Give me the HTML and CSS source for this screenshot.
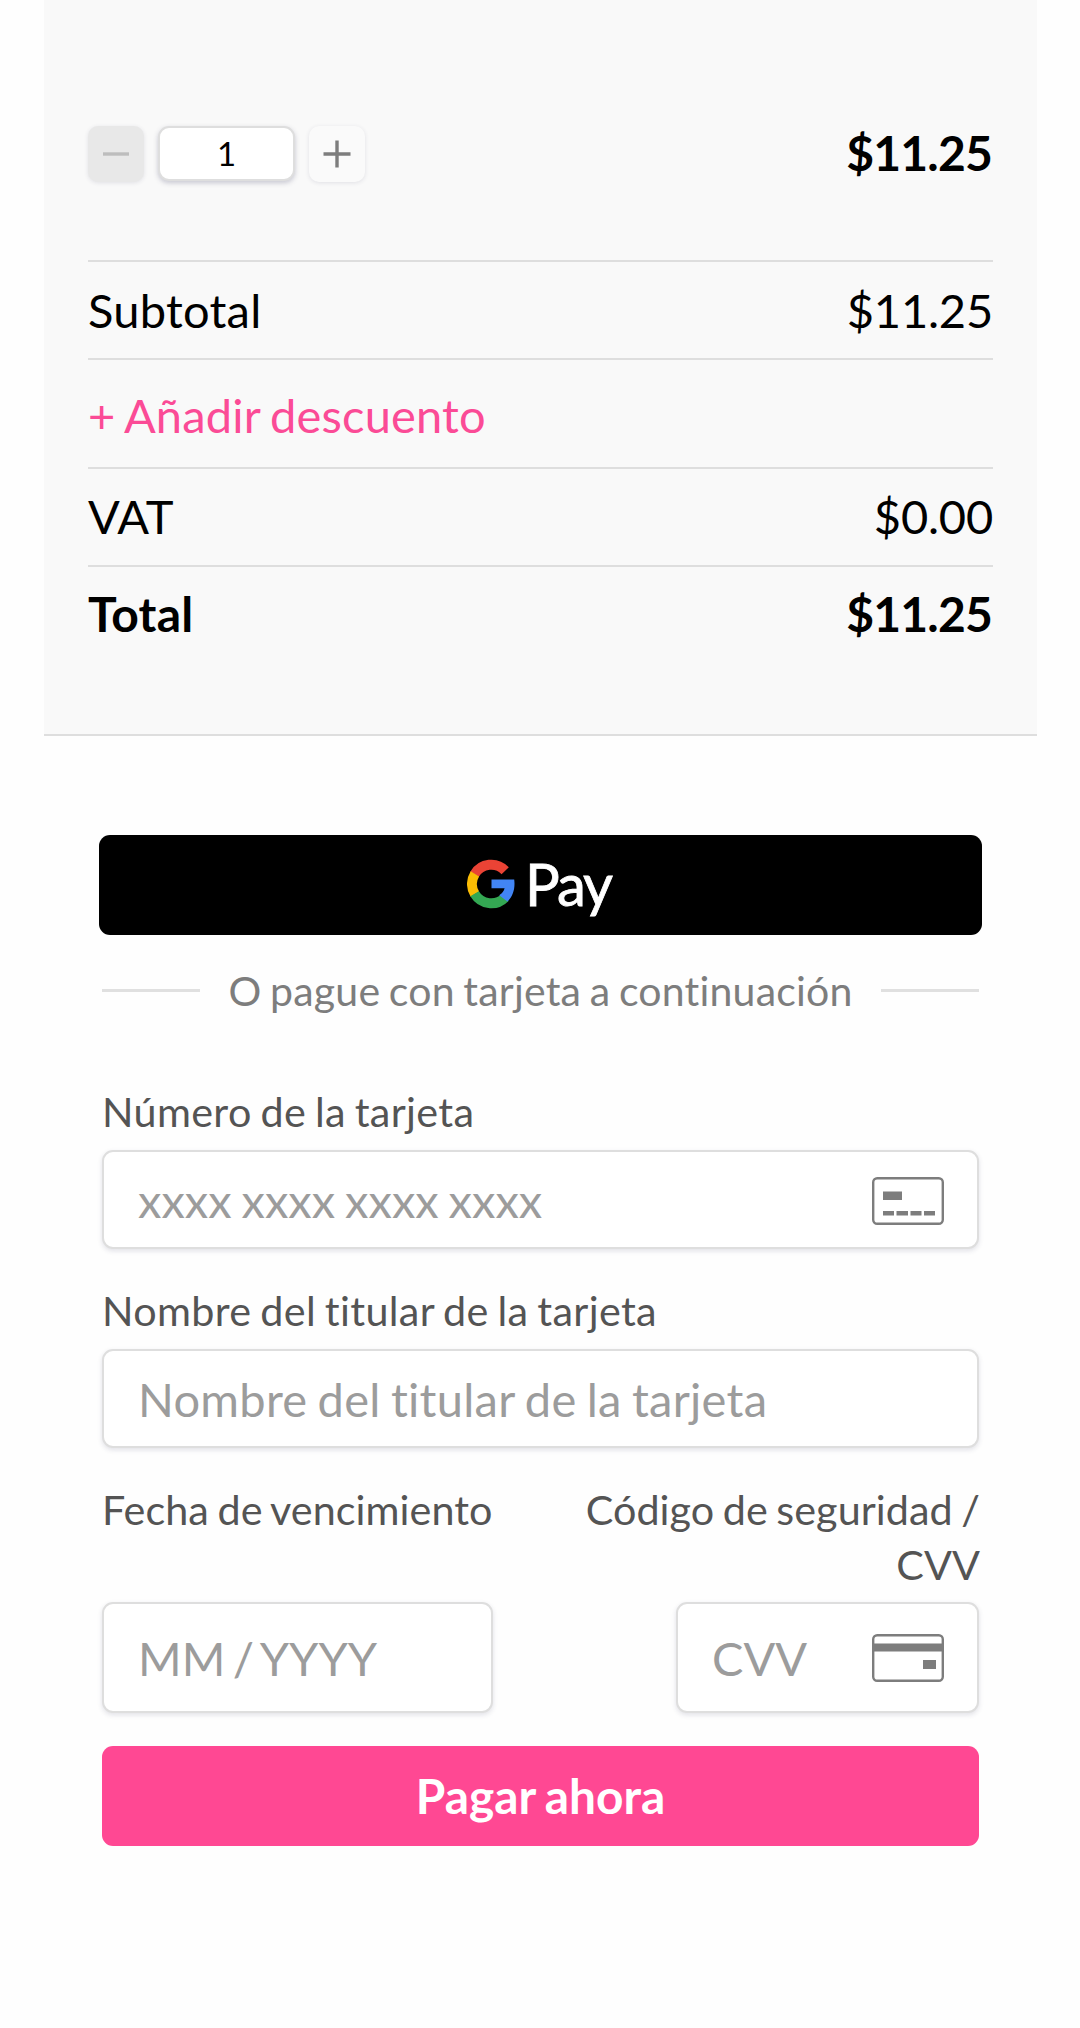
FILE: index.html
```html
<!DOCTYPE html>
<html lang="es">
<head>
  <meta charset="UTF-8">
  <meta name="viewport" content="width=device-width, initial-scale=1.0">
  <title>Pago</title>
  <link rel="stylesheet" href="styles.css">
</head>
<body>

  <!-- Order summary -->
  <section class="summary">
    <div class="item">
      <div class="quantity">
        <button class="qty-btn disabled" type="button" aria-label="Menos">
          <svg width="28" height="28" viewBox="0 0 28 28"><path d="M1 14h26" stroke="#bdbdbd" stroke-width="3.4"/></svg>
        </button>
        <input class="qty-input" type="text" value="1">
        <button class="qty-btn" type="button" aria-label="Más">
          <svg width="28" height="28" viewBox="0 0 28 28"><path d="M.5 14h27M14 .5v27" stroke="#7d7d7d" stroke-width="3.4"/></svg>
        </button>
      </div>
      <strong class="amount">$11.25</strong>
    </div>
    <div class="row"><span class="name">Subtotal</span><span class="amount">$11.25</span></div>
    <div class="row discount"><a href="#">+ Añadir descuento</a></div>
    <div class="row tax"><span>VAT</span><span class="amount">$0.00</span></div>
    <div class="row total"><span class="name">Total</span><span class="amount">$11.25</span></div>
  </section>

  <!-- Payment -->
  <form class="payment">
    <button class="gpay" type="button">
      <svg width="49" height="50" viewBox="0 4 49 50">
        <g fill="none" stroke-width="10">
          <path stroke="#ea4335" d="M38.2 15.7A19.3 19.3 0 0 0 7.6 19.2"/>
          <path stroke="#fbbc04" d="M7.9 18.8A19.3 19.3 0 0 0 7.9 39.2"/>
          <path stroke="#34a853" d="M7.6 38.8A19.3 19.3 0 0 0 38 42.4"/>
        </g>
        <path fill="#4285f4" d="M24.5 24.4H47.2C48.4 33 46 41.5 40.4 46.6L32.2 40.3C35.2 38.4 37 36 37.6 33.3H24.5Z"/>
      </svg>
      <span class="gpay-text">Pay</span>
    </button>

    <div class="divider"><span>O pague con tarjeta a continuación</span></div>

    <div class="field wide">
      <label for="number">Número de la tarjeta</label>
      <div class="control">
        <input id="number" type="text" placeholder="xxxx xxxx xxxx xxxx">
        <svg class="card-icon" width="72" height="48" viewBox="0 0 72 48">
          <rect x="1.2" y="1.2" width="69.6" height="45.6" rx="4" fill="none" stroke="#7d7d7d" stroke-width="2.4"/>
          <path fill="#7d7d7d" d="M11 14.5h19v8.5H11zM11 34h11v4.5H11zM24.5 34H36v4.5H24.5zM38.5 34h11v4.5h-11zM52 34h11v4.5H52z"/>
        </svg>
      </div>
    </div>

    <div class="field wide holder">
      <label for="name">Nombre del titular de la tarjeta</label>
      <div class="control">
        <input id="name" type="text" placeholder="Nombre del titular de la tarjeta">
      </div>
    </div>

    <div class="field-group">
      <div class="field expiry">
        <label for="expiry">Fecha de vencimiento</label>
        <div class="control">
          <input id="expiry" type="text" placeholder="MM / YYYY">
        </div>
      </div>
      <div class="field cvv">
        <label for="cvv">Código de seguridad / CVV</label>
        <div class="control">
          <input id="cvv" type="text" placeholder="CVV">
          <svg class="card-icon" width="72" height="48" viewBox="0 0 72 48">
            <rect x="1.2" y="1.2" width="69.6" height="45.6" rx="4" fill="none" stroke="#7d7d7d" stroke-width="2.4"/>
            <path fill="#7d7d7d" d="M0 9.5h72v8H0zM51 26h13v9H51z"/>
          </svg>
        </div>
      </div>
    </div>

    <button class="pay-now" type="submit">Pagar ahora</button>
  </form>

</body>
</html>
```
FILE: styles.css
```css
* {
  box-sizing: border-box;
}

body {
  margin: 0;
  height: 2028px;
  background: #fefefe;
  color: #000;
  font-family: Lato, sans-serif;
  font-size: 47px;
  font-variant-ligatures: none;
  word-spacing: -0.045em;
}

button,
input {
  font-family: inherit;
  font-variant-ligatures: none;
  word-spacing: -0.045em;
  border: none;
  padding: 0;
}

/* Order summary */
.summary {
  width: 993px;
  height: 736px;
  margin-left: 44px;
  padding: 49px 44px 0;
  background: #f9f9f9;
  border-bottom: 2px solid #dedede;
}

.item {
  display: flex;
  justify-content: space-between;
  align-items: center;
  height: 211px;
  padding-bottom: 2px;
}

.item strong {
  padding-bottom: 2px;
  font-size: 48px;
}

.name {
  letter-spacing: 0.25px;
}

.amount {
  letter-spacing: -0.2px;
}

.item .amount,
.total .amount {
  padding-right: 1px;
  letter-spacing: -0.8px;
}

.quantity {
  display: flex;
  align-items: center;
  gap: 14px;
}

.qty-btn {
  display: flex;
  align-items: center;
  justify-content: center;
  width: 56px;
  height: 56px;
  border-radius: 10px;
  background: #fafafa;
  box-shadow: 0 1px 4px rgba(50, 50, 93, 0.12);
}

.qty-btn.disabled {
  background: #e8e8e8;
}

.qty-input {
  width: 137px;
  height: 55px;
  padding-bottom: 2px;
  border: 2px solid #dedede;
  border-radius: 11px;
  background: #fff;
  box-shadow: 0 2px 5px rgba(50, 50, 93, 0.25);
  font-size: 33px;
  text-align: center;
}

.row {
  display: flex;
  justify-content: space-between;
  align-items: center;
  height: 98px;
  border-top: 2px solid #dedede;
}

.discount {
  height: 109px;
  padding-top: 3px;
}

.discount a {
  color: #fb4b96;
  letter-spacing: 0.17px;
  text-decoration: none;
}

.tax {
  padding-bottom: 2px;
}

.total {
  height: 94px;
  font-size: 48px;
  font-weight: bold;
}

/* Payment */
.payment {
  width: 877px;
  margin: 99px 0 0 102px;
}

.gpay {
  display: flex;
  align-items: center;
  width: 883px;
  height: 100px;
  margin-left: -3px;
  padding: 0 0 2px 368px;
  border-radius: 11px;
  background: #000;
}

.gpay-text {
  margin-left: 9px;
  color: #fff;
  font-size: 58px;
  letter-spacing: -2px;
  line-height: 76px;
  -webkit-text-stroke: 0.8px #fff;
}

.divider {
  display: flex;
  align-items: center;
  gap: 28px;
  height: 54px;
  margin-top: 28px;
  color: #7d7d7d;
  font-size: 41px;
  letter-spacing: 0.2px;
  white-space: nowrap;
}

.divider::before,
.divider::after {
  content: "";
  flex: 1;
  height: 3px;
  background: #e0e0e0;
}

.field label {
  display: block;
  color: #545454;
  font-size: 41.3px;
  line-height: 55px;
}

.wide {
  height: 199px;
}

.wide label {
  letter-spacing: 0.35px;
}

.divider + .field {
  margin-top: 67px;
}

.control {
  display: flex;
  align-items: center;
  height: 99px;
  margin-top: 11px;
  padding: 0 33px 0 34px;
  border: 2px solid #dedede;
  border-radius: 11px;
  background: #fff;
  box-shadow: 0 2px 5px rgba(50, 50, 93, 0.14);
}

.control input {
  flex: 1;
  min-width: 0;
  height: 60px;
  background: none;
  font-size: 47px;
}

.control input::placeholder {
  color: #9c9c9c;
}

.holder input {
  letter-spacing: 0.28px;
}

.expiry input {
  word-spacing: -4.5px;
}

.card-icon {
  flex: none;
  margin-top: 2px;
}

.field-group {
  display: flex;
  justify-content: space-between;
}

.field-group label {
  height: 110px;
  letter-spacing: 0.06px;
}

.field-group .control {
  height: 111px;
  margin-top: 10px;
}

.cvv label {
  margin-right: -1px;
}

.cvv .card-icon {
  margin-top: 0;
}

.expiry .control {
  width: 391px;
}

.cvv {
  width: 420px;
  text-align: right;
}

.cvv .control {
  width: 303px;
  margin-left: auto;
}

.pay-now {
  display: block;
  width: 877px;
  height: 100px;
  margin-top: 33px;
  padding-bottom: 2px;
  border-radius: 11px;
  background: #ff4893;
  color: #fff;
  font-size: 47.8px;
  font-weight: bold;
}
```
